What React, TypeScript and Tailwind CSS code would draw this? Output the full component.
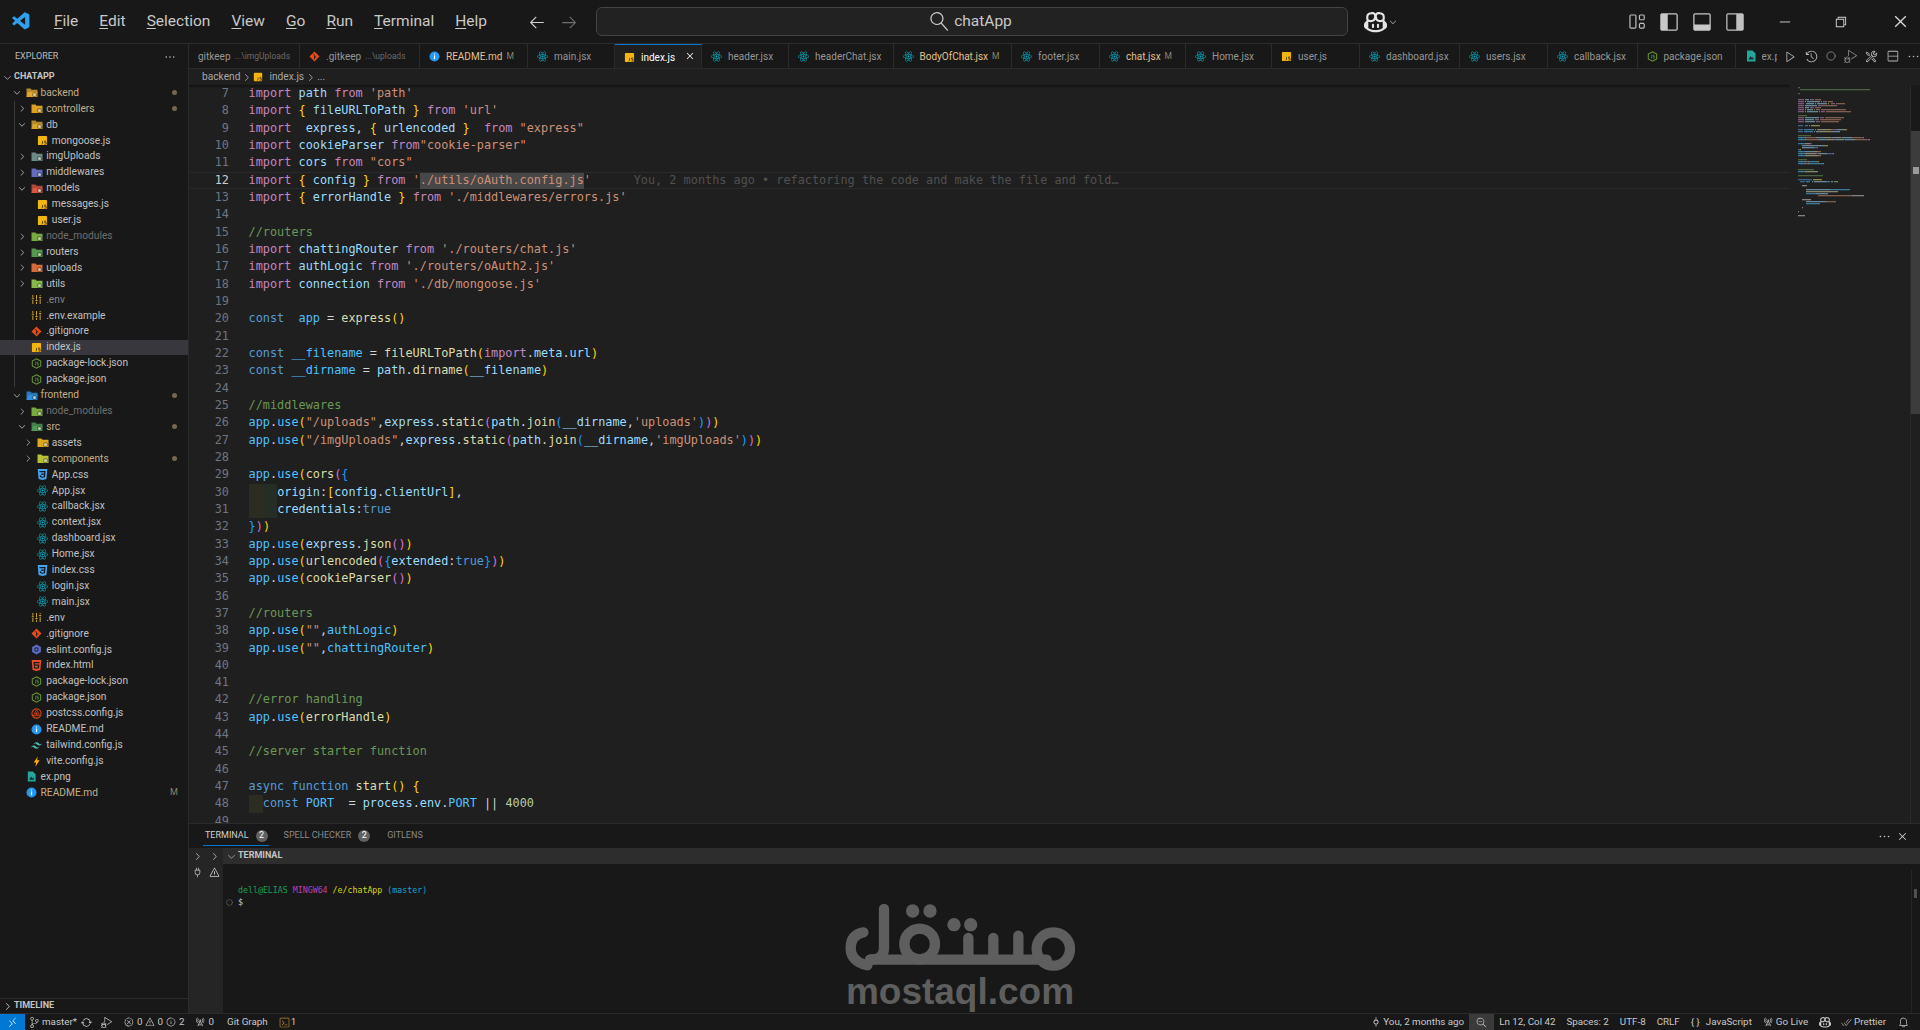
import React from "react";
import { Circle } from "lucide-react";
import { SiReact, SiTailwindcss, SiHtml5, SiCss3 } from "react-icons/si";
import {
  VscVscode, VscArrowLeft, VscArrowRight, VscSearch, VscCopilot, VscChevronDown, VscChevronRight,
  VscLayout, VscLayoutSidebarLeft, VscLayoutPanel, VscLayoutSidebarRight, VscChromeMinimize,
  VscChromeRestore, VscChromeClose, VscEllipsis, VscClose, VscPlay, VscRemote, VscSourceControl,
  VscSync, VscError, VscWarning, VscInfo, VscRadioTower, VscBell, VscGitCommit, VscZoomOut,
  VscCheckAll, VscPlug, VscTerminal, VscSplitVertical, VscHistory,
  VscDebugAlt, VscTools,
} from "react-icons/vsc";

type Tok = [string, string];

const tone: Record<string, string> = {
  k: "text-[#c586c0]",
  v: "text-[#9cdcfe]",
  s: "text-[#ce9178]",
  y: "text-[#ffd700]",
  p: "text-[#da70d6]",
  b: "text-[#179fff]",
  c: "text-[#6a9955]",
  d: "text-[#569cd6]",
  f: "text-[#dcdcaa]",
  a: "text-[#4fc1ff]",
  w: "text-[#d4d4d4]",
  m: "text-[#b5cea8]",
  g: "text-[#505050]",
  x: "text-[#ce9178] bg-[#474747] inline-block h-[16px] align-top",
  i1: "inline-block h-[17.34px] align-top bg-[#2d2c22]",
  i2: "inline-block h-[17.34px] align-top bg-[#252d25]",
};

const miniColor: Record<string, string> = {
  k: "#c586c0", v: "#9cdcfe", s: "#ce9178", y: "#ffd700", p: "#da70d6", b: "#179fff",
  c: "#6a9955", d: "#569cd6", f: "#dcdcaa", a: "#4fc1ff", w: "#d4d4d4", m: "#b5cea8", x: "#ce9178",
};

const appUse: Tok[] = [["a", "app"], ["w", "."], ["a", "use"], ["y", "("]];

const code: Tok[][] = [
  [["k", "import "], ["v", "path "], ["k", "from "], ["s", "'path'"]],
  [["k", "import "], ["y", "{ "], ["v", "fileURLToPath "], ["y", "} "], ["k", "from "], ["s", "'url'"]],
  [["k", "import  "], ["v", "express"], ["w", ", "], ["y", "{ "], ["v", "urlencoded "], ["y", "}  "], ["k", "from "], ["s", '"express"']],
  [["k", "import "], ["v", "cookieParser "], ["k", "from"], ["s", '"cookie-parser"']],
  [["k", "import "], ["v", "cors "], ["k", "from "], ["s", '"cors"']],
  [["k", "import "], ["y", "{ "], ["v", "config "], ["y", "} "], ["k", "from "], ["s", "'"], ["x", "./utils/oAuth.config.js"], ["s", "'"], ["g", "      You, 2 months ago • refactoring the code and make the file and fold…"]],
  [["k", "import "], ["y", "{ "], ["v", "errorHandle "], ["y", "} "], ["k", "from "], ["s", "'./middlewares/errors.js'"]],
  [],
  [["c", "//routers"]],
  [["k", "import "], ["v", "chattingRouter "], ["k", "from "], ["s", "'./routers/chat.js'"]],
  [["k", "import "], ["v", "authLogic "], ["k", "from "], ["s", "'./routers/oAuth2.js'"]],
  [["k", "import "], ["v", "connection "], ["k", "from "], ["s", "'./db/mongoose.js'"]],
  [],
  [["d", "const  "], ["a", "app "], ["w", "= "], ["f", "express"], ["y", "()"]],
  [],
  [["d", "const "], ["a", "__filename "], ["w", "= "], ["f", "fileURLToPath"], ["y", "("], ["k", "import"], ["w", "."], ["v", "meta"], ["w", "."], ["v", "url"], ["y", ")"]],
  [["d", "const "], ["a", "__dirname "], ["w", "= "], ["v", "path"], ["w", "."], ["f", "dirname"], ["y", "("], ["v", "__filename"], ["y", ")"]],
  [],
  [["c", "//middlewares"]],
  [...appUse, ["s", '"/uploads"'], ["w", ","], ["v", "express"], ["w", "."], ["f", "static"], ["p", "("], ["v", "path"], ["w", "."], ["f", "join"], ["b", "("], ["v", "__dirname"], ["w", ","], ["s", "'uploads'"], ["b", ")"], ["p", ")"], ["y", ")"]],
  [...appUse, ["s", '"/imgUploads"'], ["w", ","], ["v", "express"], ["w", "."], ["f", "static"], ["p", "("], ["v", "path"], ["w", "."], ["f", "join"], ["b", "("], ["v", "__dirname"], ["w", ","], ["s", "'imgUploads'"], ["b", ")"], ["p", ")"], ["y", ")"]],
  [],
  [...appUse, ["f", "cors"], ["p", "("], ["b", "{"]],
  [["i1", "  "], ["i2", "  "], ["v", "origin"], ["w", ":"], ["y", "["], ["v", "config"], ["w", "."], ["v", "clientUrl"], ["y", "]"], ["w", ","]],
  [["i1", "  "], ["i2", "  "], ["v", "credentials"], ["w", ":"], ["d", "true"]],
  [["b", "}"], ["p", ")"], ["y", ")"]],
  [...appUse, ["v", "express"], ["w", "."], ["f", "json"], ["p", "()"], ["y", ")"]],
  [...appUse, ["f", "urlencoded"], ["p", "("], ["b", "{"], ["v", "extended"], ["w", ":"], ["d", "true"], ["b", "}"], ["p", ")"], ["y", ")"]],
  [...appUse, ["f", "cookieParser"], ["p", "()"], ["y", ")"]],
  [],
  [["c", "//routers"]],
  [...appUse, ["s", '""'], ["w", ","], ["a", "authLogic"], ["y", ")"]],
  [...appUse, ["s", '""'], ["w", ","], ["a", "chattingRouter"], ["y", ")"]],
  [],
  [],
  [["c", "//error handling"]],
  [...appUse, ["f", "errorHandle"], ["y", ")"]],
  [],
  [["c", "//server starter function"]],
  [],
  [["d", "async function "], ["f", "start"], ["y", "() {"]],
  [["i1", "  "], ["d", "const "], ["a", "PORT  "], ["w", "= "], ["v", "process"], ["w", "."], ["v", "env"], ["w", "."], ["a", "PORT "], ["w", "|| "], ["m", "4000"]],
  [],
];

// rest of the file, only seen in the minimap: [line, indent, length, colour]
const miniExtra: [number, number, number, string][] = [
  [1, 0, 2, "c"], [2, 2, 70, "c"], [4, 0, 2, "c"],
  [50, 4, 5, "w"], [52, 8, 24, "v"], [52, 32, 20, "a"], [53, 8, 32, "f"], [54, 8, 10, "a"], [54, 18, 12, "v"],
  [55, 20, 34, "s"], [55, 54, 12, "w"], [57, 4, 9, "w"], [58, 8, 20, "v"], [58, 28, 10, "s"], [59, 8, 14, "a"],
  [61, 4, 1, "w"], [63, 0, 1, "w"], [65, 0, 7, "w"],
];

type RowData = {
  d: number;
  label: string;
  icon: string;
  open?: boolean;
  chev?: boolean;
  color?: string;
  dot?: boolean;
  m?: boolean;
  guide?: boolean;
  active?: boolean;
};

const labelTone: Record<string, string> = {
  tan: "text-[#c4ae88]",
  dim: "text-[#6f6f6f]",
  dim2: "text-[#858585]",
  norm: "text-[#c0c0c0]",
};

const tree: RowData[] = [
  { d: 1, label: "backend", icon: "#e0a92e", chev: true, open: true, color: "tan", dot: true },
  { d: 2, label: "controllers", icon: "#e8a820", chev: true, color: "tan", dot: true, guide: true },
  { d: 2, label: "db", icon: "#d9a62a", chev: true, open: true, guide: true },
  { d: 3, label: "mongoose.js", icon: "js", guide: true },
  { d: 2, label: "imgUploads", icon: "#6f8f8f", chev: true, guide: true },
  { d: 2, label: "middlewares", icon: "#6670c9", chev: true, guide: true },
  { d: 2, label: "models", icon: "#d9563f", chev: true, open: true, guide: true },
  { d: 3, label: "messages.js", icon: "js", guide: true },
  { d: 3, label: "user.js", icon: "js", guide: true },
  { d: 2, label: "node_modules", icon: "#7cb342", chev: true, color: "dim", guide: true },
  { d: 2, label: "routers", icon: "#5a9f52", chev: true, guide: true },
  { d: 2, label: "uploads", icon: "#e0703a", chev: true, guide: true },
  { d: 2, label: "utils", icon: "#8bc34a", chev: true, guide: true },
  { d: 2, label: ".env", icon: "env", color: "dim2", guide: true },
  { d: 2, label: ".env.example", icon: "env", guide: true },
  { d: 2, label: ".gitignore", icon: "git", guide: true },
  { d: 2, label: "index.js", icon: "js", guide: true, active: true },
  { d: 2, label: "package-lock.json", icon: "node", guide: true },
  { d: 2, label: "package.json", icon: "node", guide: true },
  { d: 1, label: "frontend", icon: "#2f8fe0", chev: true, open: true, color: "tan", dot: true },
  { d: 2, label: "node_modules", icon: "#7cb342", chev: true, color: "dim" },
  { d: 2, label: "src", icon: "#4f9a55", chev: true, open: true, color: "tan", dot: true },
  { d: 3, label: "assets", icon: "#e8b020", chev: true },
  { d: 3, label: "components", icon: "#c0ca33", chev: true, color: "tan", dot: true },
  { d: 3, label: "App.css", icon: "css" },
  { d: 3, label: "App.jsx", icon: "react" },
  { d: 3, label: "callback.jsx", icon: "react" },
  { d: 3, label: "context.jsx", icon: "react" },
  { d: 3, label: "dashboard.jsx", icon: "react" },
  { d: 3, label: "Home.jsx", icon: "react" },
  { d: 3, label: "index.css", icon: "css" },
  { d: 3, label: "login.jsx", icon: "react" },
  { d: 3, label: "main.jsx", icon: "react" },
  { d: 2, label: ".env", icon: "env" },
  { d: 2, label: ".gitignore", icon: "git" },
  { d: 2, label: "eslint.config.js", icon: "eslint" },
  { d: 2, label: "index.html", icon: "html" },
  { d: 2, label: "package-lock.json", icon: "node" },
  { d: 2, label: "package.json", icon: "node" },
  { d: 2, label: "postcss.config.js", icon: "postcss" },
  { d: 2, label: "README.md", icon: "info" },
  { d: 2, label: "tailwind.config.js", icon: "tailwind" },
  { d: 2, label: "vite.config.js", icon: "vite" },
  { d: 1, label: "ex.png", icon: "image" },
  { d: 1, label: "README.md", icon: "info", color: "tan", m: true },
];

const depthPad: Record<number, string> = { 1: "pl-[11.6px]", 2: "pl-[17.2px]", 3: "pl-[22.8px]" };

const tabs: { w: string; icon: string; label: string; hint?: string; mark?: boolean; mod?: boolean; active?: boolean }[] = [
  { w: "w-[111px]", icon: "", label: "gitkeep", hint: "...\\imgUploads" },
  { w: "w-[120px]", icon: "git", label: ".gitkeep", hint: "...\\uploads" },
  { w: "w-[108px]", icon: "info", label: "README.md", mark: true, mod: true },
  { w: "w-[87px]", icon: "react", label: "main.jsx" },
  { w: "w-[87px]", icon: "js", label: "index.js", active: true },
  { w: "w-[87px]", icon: "react", label: "header.jsx" },
  { w: "w-[104.5px]", icon: "react", label: "headerChat.jsx" },
  { w: "w-[118.5px]", icon: "react", label: "BodyOfChat.jsx", mark: true, mod: true },
  { w: "w-[88px]", icon: "react", label: "footer.jsx" },
  { w: "w-[86px]", icon: "react", label: "chat.jsx", mark: true, mod: true },
  { w: "w-[86px]", icon: "react", label: "Home.jsx" },
  { w: "w-[88px]", icon: "js", label: "user.js" },
  { w: "w-[100px]", icon: "react", label: "dashboard.jsx" },
  { w: "w-[88px]", icon: "react", label: "users.jsx" },
  { w: "w-[89.5px]", icon: "react", label: "callback.jsx" },
  { w: "w-[98px]", icon: "node", label: "package.json" },
];

function FileIcon({ kind, size = 11 }: { kind: string; size?: number }) {
  if (kind === "react") return <SiReact size={size} color="#00acc1" />;
  if (kind === "tailwind") return <SiTailwindcss size={size} color="#4db6ac" />;
  if (kind === "html") return <SiHtml5 size={size} color="#e44d26" />;
  if (kind === "css") return <SiCss3 size={size} color="#42a5f5" />;
  return (
    <svg width={size} height={size} viewBox="0 0 12 12" className="shrink-0">
      {kind === "js" && (
        <>
          <rect x="1" y="1" width="10" height="10" rx="1" fill="#f5b50f" />
          <path d="M6 6.5v3l-1 .5M10 6.5H8.3v1.5H10v2H8" stroke="#3a2c05" strokeWidth="0.8" fill="none" />
        </>
      )}
      {kind === "node" && (
        <>
          <path d="M6 .8 10.6 3.4v5.2L6 11.2 1.4 8.6V3.4Z" fill="none" stroke="#6a9a32" strokeWidth="1.1" />
          <path d="M5.2 4v3.6l-.9.4M8 4.4H6.8v1.5H8v2H6.6" fill="none" stroke="#6a9a32" strokeWidth="0.8" />
        </>
      )}
      {kind === "git" && (
        <>
          <path d="M6 .5 11.5 6 6 11.5.5 6Z" fill="#e64a19" />
          <path d="M5 3.5 6 5v4M6 5.5l2 1.5" stroke="#241a16" strokeWidth="1" fill="none" />
        </>
      )}
      {kind === "env" && (
        <path
          d="M2 1v3M2 6.5V11M.8 5.2h2.4M6 1v5M6 8.5V11M4.8 7.2h2.4M10 1v1.5M10 5v6M8.8 3.7h2.4"
          stroke="#c9a227"
          strokeWidth="1.1"
          fill="none"
        />
      )}
      {kind === "info" && (
        <>
          <circle cx="6" cy="6" r="5.5" fill="#2196f3" />
          <path d="M6 5v4M6 2.8v1" stroke="#fff" strokeWidth="1.4" />
        </>
      )}
      {kind === "eslint" && (
        <>
          <path d="M6 .6 10.8 3.3v5.4L6 11.4 1.2 8.7V3.3Z" fill="#5c6bc0" />
          <circle cx="6" cy="6" r="2.4" fill="#1f2340" />
          <circle cx="6" cy="6" r="1.2" fill="#7986cb" />
        </>
      )}
      {kind === "postcss" && (
        <>
          <circle cx="6" cy="6" r="5" fill="none" stroke="#d84315" strokeWidth="1.2" />
          <path d="M6 2 9.6 8.4H2.4Z" fill="none" stroke="#d84315" strokeWidth="0.9" />
          <circle cx="6" cy="6.2" r="1.3" fill="#d84315" />
        </>
      )}
      {kind === "vite" && <path d="M7.4.5 3 7h2.6l-.8 4.7L9.4 4.6H6.7Z" fill="#ffab00" />}
      {kind === "image" && (
        <>
          <path d="M2 .5h5.5L10.5 3.5V11.5H2Z" fill="#26a69a" />
          <path d="M3.5 9.5 5.5 6l1.5 2 1-1 .8 2.5Z" fill="#12312e" />
        </>
      )}
    </svg>
  );
}

function Folder({ color, open }: { color: string; open?: boolean }) {
  return (
    <svg width="12" height="11" viewBox="0 0 12 11" className="shrink-0">
      <path d="M.5 1.5h4l1 1.2h6V10H.5Z" fill={color} fillOpacity={open ? 0.8 : 0.95} />
      {open && <path d="M2 5h9.5L10.5 10H.5Z" fill={color} />}
      <circle cx="8.5" cy="7.5" r="2.5" fill="#181818" fillOpacity="0.35" />
      <circle cx="8.5" cy="7.5" r="1.5" fill="#f4f0e0" fillOpacity="0.7" />
    </svg>
  );
}

function TreeRow({ row }: { row: RowData }) {
  return (
    <div
      className={`relative flex h-[15.92px] shrink-0 items-center ${depthPad[row.d]} ${row.active ? "bg-[#37373d]" : ""}`}
    >
      {row.guide && <span className="absolute bottom-0 left-[14px] top-0 w-px bg-[#3a3a3a]" />}
      <span className="flex w-[10px] shrink-0 justify-center text-[#b0b0b0]">
        {row.chev && (row.open ? <VscChevronDown size={11} /> : <VscChevronRight size={11} />)}
      </span>
      <span className="flex w-[19px] shrink-0 pl-[4px]">
        {row.icon.startsWith("#") ? <Folder color={row.icon} open={row.open} /> : <FileIcon kind={row.icon} />}
      </span>
      <span className={`text-[10.2px] leading-none ${labelTone[row.color ?? "norm"]}`}>{row.label}</span>
      {row.dot && <span className="absolute left-[171.5px] h-[5px] w-[5px] rounded-full bg-[#76684e]" />}
      {row.m && <span className="absolute left-[170px] text-[9px] text-[#8f8468]">M</span>}
    </div>
  );
}

function Sidebar() {
  return (
    <aside className="flex w-[189px] shrink-0 flex-col border-r border-[#2b2b2b] bg-[#181818]">
      <div className="flex h-[25px] items-center justify-between pl-[15px] pr-[12px]">
        <span className="text-[9px] text-[#bbbbbb]">EXPLORER</span>
        <VscEllipsis size={12} className="text-[#cccccc]" />
      </div>
      <div className="flex h-[16px] items-center pl-[2px]">
        <VscChevronDown size={11} className="text-[#cccccc]" />
        <span className="ml-[1px] text-[9px] font-bold text-[#c4c4c4]">CHATAPP</span>
      </div>
      {tree.map((row, i) => (
        <TreeRow key={i} row={row} />
      ))}
      <div className="mt-auto flex h-[15px] items-center border-t border-[#2b2b2b] pl-[2px]">
        <VscChevronRight size={11} className="text-[#cccccc]" />
        <span className="ml-[1px] text-[9px] font-bold text-[#c4c4c4]">TIMELINE</span>
      </div>
    </aside>
  );
}

function TitleBar() {
  const menu = ["File", "Edit", "Selection", "View", "Go", "Run", "Terminal", "Help"];
  return (
    <header className="flex h-[44px] shrink-0 items-center border-b border-[#2b2b2b] bg-[#181818] pl-[11px]">
      <VscVscode size={21} className="text-[#2f9ff0]" />
      <nav className="ml-[22px] flex w-[433px] justify-between text-[15.5px] text-[#c8c8c8]">
        {menu.map((m) => (
          <span key={m}>
            <span className="underline underline-offset-2">{m[0]}</span>
            {m.slice(1)}
          </span>
        ))}
      </nav>
      <VscArrowLeft size={18} className="ml-[41px] text-[#d0d0d0]" />
      <VscArrowRight size={18} className="ml-[14px] text-[#6f6f6f]" />
      <div className="ml-[18px] flex h-[29px] w-[752px] items-center justify-center rounded-md border border-[#444444] bg-[#222222] pr-[2px] text-[15.5px] text-[#c8c8c8]">
        <VscSearch size={19} className="mr-[5px] -scale-x-100" />
        chatApp
      </div>
      <VscCopilot size={23} className="ml-[16px] text-[#e4e4e4]" />
      <VscChevronDown size={10} className="ml-[1px] text-[#b0b0b0]" />
      <VscLayout size={19} className="ml-[229px] text-[#c0c0c0]" />
      <VscLayoutSidebarLeft size={20} className="ml-[13px] text-[#c8c8c8]" />
      <VscLayoutPanel size={20} className="ml-[13px] text-[#c8c8c8]" />
      <VscLayoutSidebarRight size={20} className="ml-[13px] text-[#c0c0c0]" />
      <VscChromeMinimize size={15} className="ml-[32px] text-[#d0d0d0]" />
      <VscChromeRestore size={15} className="ml-[41px] text-[#d0d0d0]" />
      <VscChromeClose size={17} className="ml-[44px] text-[#d8d8d8]" />
    </header>
  );
}

function TabBar() {
  return (
    <div className="flex h-[25px] shrink-0 overflow-hidden border-b border-[#2b2b2b] bg-[#181818]">
      {tabs.map((t) => (
        <div
          key={t.label + t.w}
          className={`flex shrink-0 items-center border-r border-[#2b2b2b] pl-[9px] text-[10px] ${t.w} ${
            t.active ? "relative -mb-px border-t border-t-[#0078d4] bg-[#1f1f1f] text-white" : ""
          } ${t.mod ? "text-[#e2c08d]" : t.active ? "" : "text-[#969696]"}`}
        >
          {t.icon && (
            <span className="mr-[6px] flex">
              <FileIcon kind={t.icon} size={11} />
            </span>
          )}
          <span className="whitespace-nowrap">{t.label}</span>
          {t.hint && <span className="ml-[4px] whitespace-nowrap text-[8.5px] text-[#6a6a6a]">{t.hint}</span>}
          {t.mark && <span className="ml-[4px] text-[8.5px] text-[#8f8468]">M</span>}
          {t.active && <VscClose size={12} className="absolute right-[5px] top-[5px] text-white" />}
        </div>
      ))}
      <div className="flex min-w-0 flex-1 items-center pl-[9px] text-[10px] text-[#969696]">
        <FileIcon kind="image" size={12} />
        <span className="ml-[5px] w-[21px] overflow-hidden whitespace-nowrap">ex.png</span>
        <div className="ml-[7px] flex items-center gap-[8px] text-[#b8b8b8]">
          <VscPlay size={13} />
          <VscHistory size={13} />
          <Circle size={10} className="text-[#8a8a8a]" />
          <VscDebugAlt size={13} className="text-[#8a8a8a]" />
          <VscTools size={13} />
          <VscSplitVertical size={13} />
          <VscEllipsis size={13} />
        </div>
      </div>
    </div>
  );
}

function Minimap() {
  const bars: React.ReactNode[] = [];
  code.forEach((line, n) => {
    let col = 0;
    line.forEach(([key, text], j) => {
      const body = text.trimEnd();
      if (miniColor[key]) {
        bars.push(
          <rect key={`${n}-${j}`} x={col} y={(n + 6) * 2} width={body.length} height="1.3" fill={miniColor[key]} fillOpacity="0.55" />,
        );
      }
      col += text.length;
    });
  });
  miniExtra.forEach(([line, x, len, key], i) => {
    bars.push(
      <rect key={`e${i}`} x={x} y={(line - 1) * 2} width={len} height="1.3" fill={miniColor[key]} fillOpacity="0.55" />,
    );
  });
  return (
    <div className="w-[120px] shrink-0 pl-[8px] pt-[2px]">
      <svg width="112" height="136" viewBox="0 0 112 136">
        {bars}
      </svg>
    </div>
  );
}

function Editor() {
  return (
    <div className="flex min-h-0 flex-1 overflow-hidden bg-[#1f1f1f]">
      <div className="min-w-0 flex-1 overflow-hidden font-['DejaVu_Sans_Mono',monospace] text-[11.85px] leading-[17.34px] shadow-[inset_0_3px_3px_-2px_#0c0c0c]">
        {code.map((line, i) => (
          <div key={i} className={`flex h-[17.34px] ${i === 5 ? "border-y border-[#2a2a2a] leading-[15.34px]" : ""}`}>
            <span className={`w-[40px] shrink-0 text-right ${i === 5 ? "text-[#cccccc]" : "text-[#6e7681]"}`}>{i + 7}</span>
            <span className="ml-[19.6px] whitespace-pre">
              {line.map(([key, text], j) => (
                <span key={j} className={tone[key]}>
                  {text}
                </span>
              ))}
            </span>
          </div>
        ))}
      </div>
      <Minimap />
      <div className="flex w-[10px] shrink-0 flex-col border-l border-[#2b2b2b]">
        <div className="h-[46px] bg-[#191919]" />
        <div className="h-[283px] bg-[#3c3c3c] pt-[36px]">
          <div className="mx-auto h-[7px] w-[6px] bg-[#9a9a9a]" />
        </div>
      </div>
    </div>
  );
}

function Watermark() {
  return (
    <div className="absolute left-[656px] top-[80px] flex w-[230px] flex-col items-center">
      <svg width="230" height="68" viewBox="195 130 690 204" fill="none" stroke="#5e5e5e" strokeWidth="31" strokeLinecap="round">
        <path d="M312 145V262Q312 297 270 297M250 215Q212 222 212 262T262 314" />
        <circle cx="419" cy="250" r="46" />
        <path d="M270 297H800M565 232V297M640 232V297M715 225V297" />
        <circle cx="820" cy="265" r="50" />
        <g fill="#5e5e5e" stroke="none">
          <circle cx="398" cy="151" r="20" />
          <circle cx="450" cy="151" r="20" />
          <circle cx="522" cy="192" r="20" />
          <circle cx="572" cy="192" r="20" />
        </g>
      </svg>
      <span className="mt-[-1px] font-['Liberation_Sans',sans-serif] text-[37px] font-bold leading-[42px] text-[#5e5e5e]">
        mostaql.com
      </span>
    </div>
  );
}

function Panel() {
  return (
    <section className="relative flex h-[190px] shrink-0 flex-col border-t border-[#2b2b2b] bg-[#181818]">
      <div className="flex h-[24px] shrink-0 items-center pl-[14px] pr-[11px] text-[9px]">
        <div className="flex h-[19px] items-center gap-[7px] border-b border-[#0078d4] pl-[2px] pr-[1px] text-[#d0d0d0]">
          TERMINAL
          <span className="flex h-[12px] w-[12px] items-center justify-center rounded-full bg-[#616161] text-white">2</span>
        </div>
        <span className="ml-[15px] text-[#8a8a8a]">SPELL CHECKER</span>
        <span className="ml-[7px] flex h-[12px] w-[12px] items-center justify-center rounded-full bg-[#616161] text-white">2</span>
        <span className="ml-[17px] text-[#8a8a8a]">GITLENS</span>
        <VscEllipsis size={13} className="ml-auto text-[#cccccc]" />
        <VscClose size={13} className="ml-[5px] text-[#dddddd]" />
      </div>
      <div className="flex min-h-0 flex-1">
        <div className="flex w-[34px] shrink-0 flex-col bg-[#252525] text-[#b5b5b5]">
          <div className="flex h-[16px] items-center justify-around">
            <VscChevronRight size={11} />
            <VscChevronRight size={11} />
          </div>
          <div className="flex h-[16px] items-center justify-around text-[#d0d0d0]">
            <VscPlug size={11} />
            <VscWarning size={11} />
          </div>
        </div>
        <div className="flex min-w-0 flex-1 flex-col">
          <div className="flex h-[16px] shrink-0 items-center bg-[#2d2d2d] pl-[3px] text-[9px] font-bold text-[#c4c4c4]">
            <VscChevronDown size={11} className="mr-[1px]" />
            TERMINAL
          </div>
          <div className="flex min-h-0 flex-1">
            <div className="flex-1 pl-[3px] pt-[20px] font-['DejaVu_Sans_Mono',monospace] text-[8.27px] leading-[12px]">
              <div className="whitespace-pre pl-[12px]">
                <span className="text-[#17a05a]">dell@ELIAS </span>
                <span className="text-[#bc3fbc]">MINGW64 </span>
                <span className="text-[#d8d810]">/e/chatApp </span>
                <span className="text-[#11a8cd]">(master)</span>
              </div>
              <div className="flex items-center text-[#cccccc]">
                <Circle size={7} className="mr-[5px] text-[#6e6e6e]" />$
              </div>
            </div>
            <div className="mt-[6px] w-[9px] shrink-0 border-l border-[#262626] pl-[2px] pt-[19px]">
              <div className="h-[9px] w-[3px] bg-[#505050]" />
            </div>
          </div>
        </div>
      </div>
      <Watermark />
    </section>
  );
}

function StatusBar() {
  return (
    <footer className="flex h-[17px] shrink-0 items-center justify-between border-t border-[#2b2b2b] bg-[#181818] text-[9.8px] text-[#c8c8c8]">
      <div className="flex h-full items-center">
        <span className="flex h-full w-[25px] items-center justify-center bg-[#0078d4] text-white">
          <VscRemote size={11} />
        </span>
        <VscSourceControl size={11} className="ml-[4px]" />
        <span className="ml-[2px]">master*</span>
        <VscSync size={11} className="ml-[4px]" />
        <VscDebugAlt size={11} className="ml-[9px]" />
        <VscError size={10} className="ml-[12px]" />
        <span className="ml-[3px]">0</span>
        <VscWarning size={10} className="ml-[3px]" />
        <span className="ml-[2px]">0</span>
        <VscInfo size={10} className="ml-[3px]" />
        <span className="ml-[3px]">2</span>
        <VscRadioTower size={10} className="ml-[11px]" />
        <span className="ml-[3px]">0</span>
        <span className="ml-[13px]">Git Graph</span>
        <VscTerminal size={11} className="ml-[11px] text-[#b8862e]" />
        <span className="ml-[1px]">1</span>
      </div>
      <div className="flex h-full items-center pr-[11px]">
        <VscGitCommit size={10} />
        <span className="ml-[2px]">You, 2 months ago</span>
        <span className="ml-[5px] flex h-full w-[25px] items-center justify-center bg-[#3a3a3a]">
          <VscZoomOut size={11} />
        </span>
        <span className="ml-[5px]">Ln 12, Col 42</span>
        <span className="ml-[11px]">Spaces: 2</span>
        <span className="ml-[11px]">UTF-8</span>
        <span className="ml-[11px]">CRLF</span>
        <span className="ml-[11px]">{"{ }"}</span>
        <span className="ml-[6px]">JavaScript</span>
        <VscRadioTower size={10} className="ml-[11px]" />
        <span className="ml-[3px]">Go Live</span>
        <VscCopilot size={12} className="ml-[11px]" />
        <VscCheckAll size={11} className="ml-[10px] text-[#a0a0a0]" />
        <span className="ml-[2px]">Prettier</span>
        <VscBell size={11} className="ml-[12px]" />
      </div>
    </footer>
  );
}

export default function App() {
  return (
    <div className="flex h-[1030px] w-[1920px] flex-col overflow-hidden bg-[#181818] font-[Roboto,sans-serif]">
      <TitleBar />
      <div className="flex min-h-0 flex-1">
        <Sidebar />
        <main className="flex min-w-0 flex-1 flex-col">
          <TabBar />
          <div className="flex h-[16px] shrink-0 items-center bg-[#1f1f1f] pl-[13px] text-[10.2px] text-[#a8a8a8]">
            backend
            <VscChevronRight size={11} className="mx-[1px]" />
            <FileIcon kind="js" size={10} />
            <span className="ml-[6px]">index.js</span>
            <VscChevronRight size={11} className="mx-[1px]" />
            ...
          </div>
          <Editor />
          <Panel />
        </main>
      </div>
      <StatusBar />
    </div>
  );
}
